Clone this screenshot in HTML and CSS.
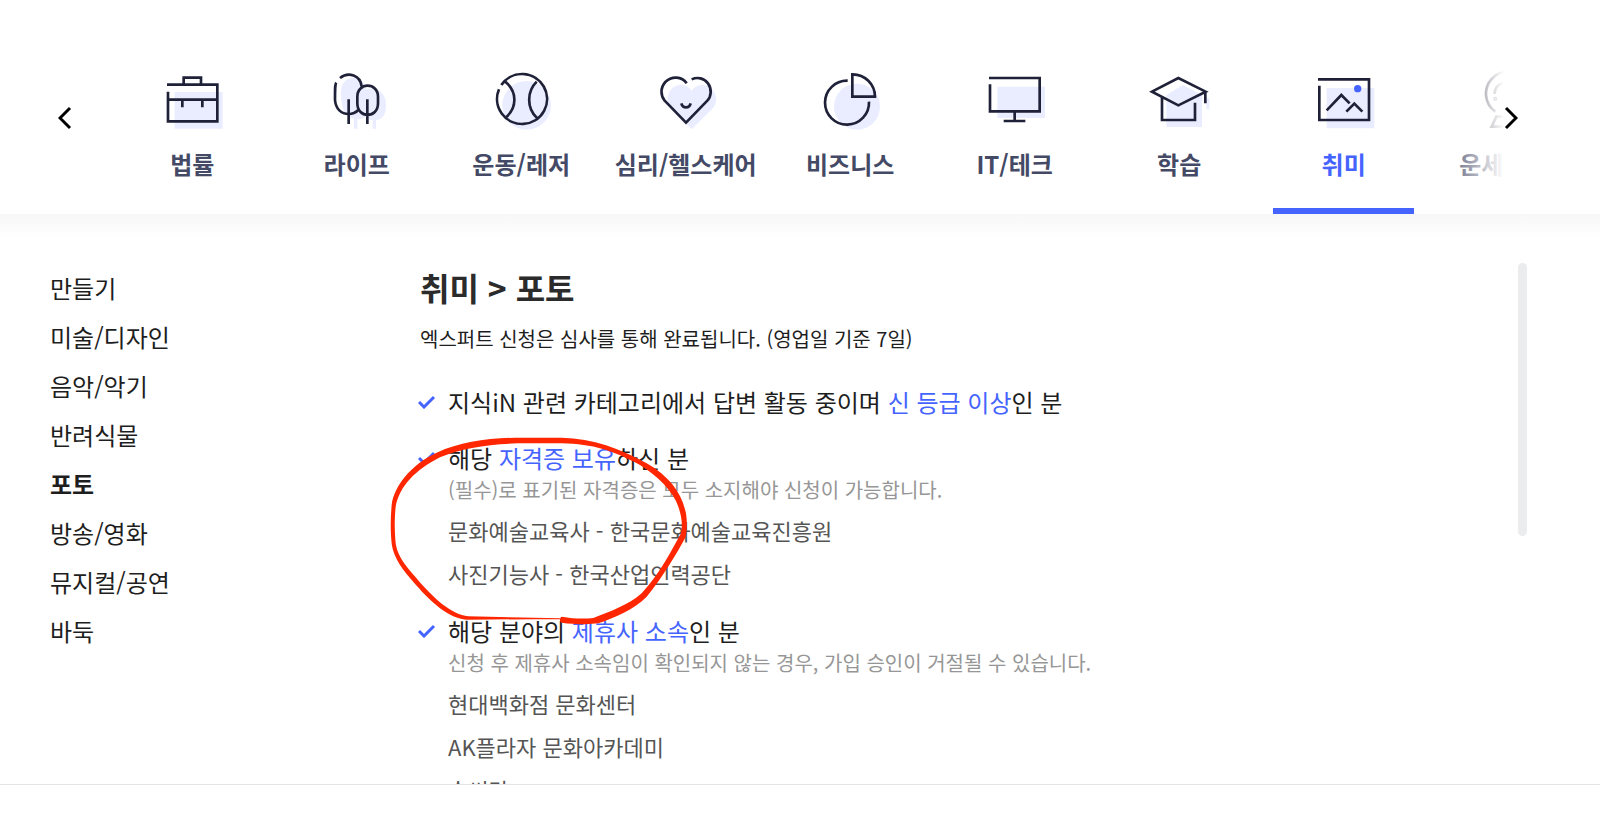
FILE: index.html
```html
<!DOCTYPE html>
<html lang="ko">
  <head>
    <meta charset="UTF-8" />
    <meta name="viewport" content="width=device-width, initial-scale=1.0" />
    <title>엑스퍼트 신청</title>
    <link rel="stylesheet" href="styles.css">
  </head>
  <body>
    <header class="category-bar">
      <button class="arrow" type="button" aria-label="이전">
        <svg width="14" height="24" viewBox="0 0 14 24"><path d="M12 2L2 12l10 10" /></svg>
      </button>
      <nav class="category-nav">
        <a class="category" href="#">
          <svg class="icon" viewBox="0 0 180 180">
            <path class="shade" d="M38 66h144v110H38z" />
            <path d="M15 44H166V154H18V65M18 89H166M65 44V23H117V44M61 89V112M121 89V112" />
          </svg>
          <span>법률</span>
        </a>
        <a class="category" href="#">
          <svg class="icon" viewBox="0 0 180 180">
            <path class="shade" d="M42 66C42 10 110 10 116 58C160 48 177 75 177 106C177 136 164 149 147 151V176H137V151C128 150 121 146 116 140C110 145 100 148 91 148V176H81V146C54 140 42 118 42 66z" />
            <path d="M39 24C64 4 101 16 104 50M28 38C24 42 24 50 24 90C26 117 43 132 65 132C76 132 86 128 94 120" />
            <path d="M91 80C91 36 153 36 153 80V100C153 146 91 146 91 100zM65 88V162M121 88V162" />
          </svg>
          <span>라이프</span>
        </a>
        <a class="category" href="#">
          <svg class="icon" viewBox="0 0 180 180">
            <circle class="shade" cx="107" cy="106" r="73" />
            <path d="M31 45A75 75 0 1 1 24 58M43 35C79 65 79 113 44 143M137 35C107 65 107 113 137 143" />
          </svg>
          <span>운동/레저</span>
        </a>
        <a class="category" href="#">
          <svg class="icon" viewBox="0 0 180 180">
            <path class="shade" d="M107 62C92 38 58 38 42 62C30 82 34 104 48 118L107 178L167 118C182 104 186 82 172 62C156 38 122 38 107 62z" />
            <path d="M92 40C78 18 46 18 28 36C12 54 14 78 26 92L90 158L154 92C166 80 168 56 156 40C144 24 124 20 107 28M76 100C80 116 100 116 104 100" />
          </svg>
          <span>심리/헬스케어</span>
        </a>
        <a class="category" href="#">
          <svg class="icon" viewBox="0 0 180 180">
            <circle class="shade" cx="111" cy="110" r="69" />
            <path d="M83 32A66 66 0 1 0 147 95M97 13V80H165A67 67 0 0 0 97 13z" />
          </svg>
          <span>비즈니스</span>
        </a>
        <a class="category" href="#">
          <svg class="icon" viewBox="0 0 180 180">
            <path class="shade" d="M37 50h143v94H37z" />
            <path d="M12 24H164V124H15V43M89 124V153M56 153H121" />
          </svg>
          <span>IT/테크</span>
        </a>
        <a class="category" href="#">
          <svg class="icon" viewBox="0 0 180 180">
            <path class="shade" d="M52 75L102 45L159 75V171H52zM172 85h9v33h-9z" />
            <path d="M9 65L88 24L170 65L88 106zM169 65V100M39 83V150H138V98" />
          </svg>
          <span>학습</span>
        </a>
        <a class="category active" href="#" aria-current="page">
          <svg class="icon" viewBox="0 0 180 180">
            <path class="shade" d="M38 54h143v121H38z" />
            <path d="M12 28H165V150H16V47M38 121L82 75L107 100M97 125L121 101L145 125" />
            <circle class="dot" cx="131" cy="56" r="11" />
          </svg>
          <span>취미</span>
        </a>
        <a class="category" href="#">
          <svg class="icon" viewBox="0 0 180 180">
            <path d="M52 125A66 66 0 1 1 128 125M50 72C50 55 60 42 75 40M55 140L41 170H139L125 140z" />
            <circle cx="52" cy="86" r="2" />
          </svg>
          <span>운세/타로</span>
        </a>
      </nav>
      <button class="arrow" type="button" aria-label="다음">
        <svg width="14" height="24" viewBox="0 0 14 24"><path d="M2 2l10 10L2 22" /></svg>
      </button>
    </header>

    <main class="content">
      <ul class="sub-menu">
        <li><a href="#">만들기</a></li>
        <li><a href="#">미술/디자인</a></li>
        <li><a href="#">음악/악기</a></li>
        <li><a href="#">반려식물</a></li>
        <li><a class="active" href="#">포토</a></li>
        <li><a href="#">방송/영화</a></li>
        <li><a href="#">뮤지컬/공연</a></li>
        <li><a href="#">바둑</a></li>
      </ul>

      <section class="detail">
        <h1>취미 &gt; 포토</h1>
        <p class="guide">엑스퍼트 신청은 심사를 통해 완료됩니다. (영업일 기준 7일)</p>

        <ul class="conditions">
          <li>
            <svg class="check" viewBox="0 0 18 14"><path d="M1 7l5 5L16 2" /></svg>
            <div>
              <h2>지식iN 관련 카테고리에서 답변 활동 중이며 <em>신 등급 이상</em>인 분</h2>
            </div>
          </li>
          <li>
            <svg class="check" viewBox="0 0 18 14"><path d="M1 7l5 5L16 2" /></svg>
            <div>
              <h2>해당 <em>자격증 보유</em>하신 분</h2>
              <p class="note">(필수)로 표기된 자격증은 모두 소지해야 신청이 가능합니다.</p>
              <ul class="names">
                <li>문화예술교육사 - 한국문화예술교육진흥원</li>
                <li>사진기능사 - 한국산업인력공단</li>
              </ul>
            </div>
          </li>
          <li>
            <svg class="check" viewBox="0 0 18 14"><path d="M1 7l5 5L16 2" /></svg>
            <div>
              <h2>해당 분야의 <em>제휴사 소속</em>인 분</h2>
              <p class="note">신청 후 제휴사 소속임이 확인되지 않는 경우, 가입 승인이 거절될 수 있습니다.</p>
              <ul class="names">
                <li>현대백화점 문화센터</li>
                <li>AK플라자 문화아카데미</li>
                <li>솜씨당</li>
              </ul>
            </div>
          </li>
        </ul>

        <!-- 손그림 강조 표시 -->
        <svg class="marker" viewBox="0 0 960 660" aria-hidden="true">
          <path d="M540 597L265 599C210 600 150 545 95 480C55 435 36 400 34 360C31 320 32 290 35 255C42 200 90 135 170 98C250 62 340 52 440 53L545 53C640 56 720 85 800 130C870 170 905 220 918 280C922 310 922 335 915 355C890 400 850 470 800 530C760 570 710 590 655 610C630 614 580 613 545 608C538 606 538 592 545 590C580 596 610 597 640 594C690 575 745 555 785 520C840 460 870 400 903 340C908 310 905 290 895 260C880 215 835 170 780 135C700 92 640 72 545 70L440 70C340 70 250 82 180 112C105 150 58 200 47 260C43 300 44 330 46 360C48 400 70 430 107 472C160 535 215 585 265 589L540 595z" />
        </svg>
      </section>

      <div class="scroll-thumb"></div>
    </main>
  </body>
</html>
```

FILE: styles.css
```css
* {
  box-sizing: border-box;
}
body {
  display: flex;
  flex-direction: column;
  height: 100vh;
  margin: 0;
  padding-bottom: 35px;
  background-color: #fff;
  color: #1e1e1e;
  font-family: "Noto Sans CJK KR", sans-serif;
  font-size: 24px;
}
h1,
h2,
p,
ul {
  margin: 0;
  padding: 0;
}
ul {
  list-style: none;
}
a {
  color: inherit;
  text-decoration: none;
}

/* 상단 카테고리 */
.category-bar {
  display: flex;
  align-items: stretch;
  flex-shrink: 0;
  height: 214px;
  padding: 0 80px 0 56px;
}
.arrow {
  flex-shrink: 0;
  width: 54px;
  padding: 24px 0 0 2px;
  border: none;
  background: none;
  text-align: left;
  cursor: pointer;
}
.arrow:last-child {
  width: 16px;
  padding-left: 0;
}
.arrow path {
  fill: none;
  stroke: #000;
  stroke-width: 3;
}
.category-nav {
  position: relative;
  display: flex;
  flex: 1;
  overflow: hidden;
}
.category-nav::after {
  content: "";
  position: absolute;
  top: 0;
  right: 0;
  width: 64px;
  height: 100%;
  background: linear-gradient(to right, rgba(255, 255, 255, 0), #fff);
}
.category {
  position: relative;
  display: flex;
  flex: 0 0 11.8%;
  flex-direction: column;
  align-items: center;
  padding-top: 70px;
  color: #444a66;
  font-weight: bold;
  line-height: 36px;
  white-space: nowrap;
}
.category span {
  margin-top: 16px;
}
.category.active {
  color: #4564ff;
}
.category.active::after {
  content: "";
  position: absolute;
  right: 12px;
  bottom: 0;
  left: 12px;
  height: 6px;
  background-color: #4564ff;
}
.icon {
  width: 60px;
  height: 60px;
  overflow: visible;
  fill: none;
  stroke: #1f2138;
  stroke-width: 8;
}
.icon .shade {
  fill: #eaedff;
  stroke: none;
}
.icon .dot {
  fill: #4564ff;
  stroke: none;
}

/* 본문 */
.content {
  display: flex;
  flex: 1;
  min-height: 0;
  padding: 49px 73px 0 50px;
  overflow: hidden;
  border-bottom: 1px solid #e4e4e4;
  background: linear-gradient(#f7f7f7, #fff 24px);
}
.sub-menu {
  flex: 0 0 370px;
  line-height: 49px;
}
.sub-menu .active {
  font-weight: bold;
}
.detail {
  position: relative;
  flex: 1;
}
.detail h1 {
  color: #2b2b2b;
  font-size: 32px;
  line-height: 48px;
}
.guide {
  margin-top: 13px;
  font-size: 20px;
  line-height: 30px;
}
.conditions {
  display: flex;
  flex-direction: column;
  gap: 16px;
  margin-top: 28px;
}
.conditions > li {
  display: flex;
  gap: 12px;
}
.conditions h2 {
  font-size: 24px;
  font-weight: normal;
  line-height: 40px;
}
.conditions em {
  color: #4564ff;
  font-style: normal;
}
.check {
  width: 18px;
  height: 14px;
  margin: 13px 0 0 -2px;
  fill: none;
  stroke: #4564ff;
  stroke-width: 3;
}
.note {
  color: #969696;
  font-size: 20px;
  line-height: 24px;
}
.names {
  margin-top: 7px;
  color: #555;
  font-size: 22px;
  line-height: 43px;
}
.marker {
  position: absolute;
  top: 157px;
  left: -40px;
  width: 320px;
  height: 220px;
  fill: #ff2600;
}
.scroll-thumb {
  flex: 0 0 9px;
  height: 273px;
  border-radius: 5px;
  background-color: #ebeced;
}
```
